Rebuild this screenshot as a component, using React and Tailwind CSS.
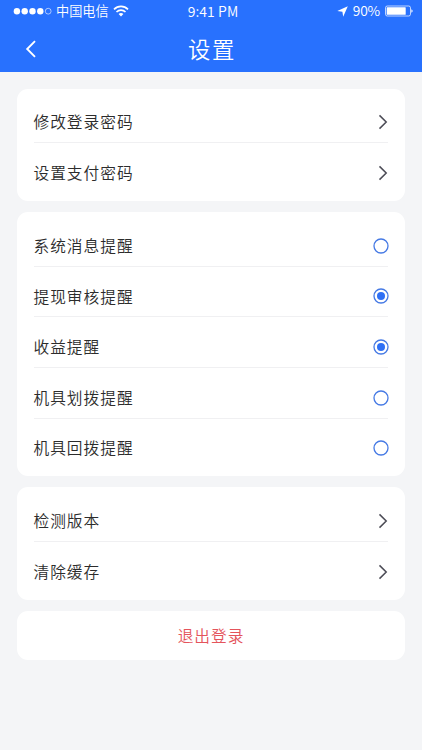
import { useState } from 'react'

const REMINDERS = [
  { id: 'system', label: '系统消息提醒' },
  { id: 'withdraw', label: '提现审核提醒' },
  { id: 'income', label: '收益提醒' },
  { id: 'assign', label: '机具划拨提醒' },
  { id: 'recall', label: '机具回拨提醒' },
]

function StatusBar() {
  return (
    <div className="grid grid-cols-3 items-center h-[23px] pl-[13px] pr-[9px] text-[13px] leading-none">
      <div className="flex items-center">
        <svg width="39" height="8" viewBox="0 0 39 8" fill="currentColor">
          <circle cx="3.9" cy="4.2" r="3.2" />
          <circle cx="11.7" cy="4.2" r="3.2" />
          <circle cx="19.5" cy="4.2" r="3.2" />
          <circle cx="27.3" cy="4.2" r="3.2" />
          <circle cx="35.2" cy="4.2" r="2.9" fill="none" stroke="currentColor" strokeWidth="0.6" />
        </svg>
        <span className="ml-1 pb-[1px] text-[13.2px] whitespace-nowrap">中国电信</span>
        <svg className="ml-1" width="16" height="12" viewBox="0 0 16 12" fill="none" stroke="currentColor" strokeWidth="1.6">
          <path d="M1 4.4C4.9 0.4 11.1 0.4 15 4.4" />
          <path d="M3.5 7C6 4.5 10 4.5 12.5 7" />
          <path d="M5.6 9C7.1 7.7 8.9 7.7 10.4 9L8 11.4Z" fill="currentColor" stroke="none" />
        </svg>
      </div>
      <span className="pb-[2px] text-center text-[14px] tracking-[0.1px]">9:41 PM</span>
      <div className="flex items-center justify-end">
        <svg width="11" height="11" viewBox="0 0 11 11" fill="currentColor">
          <path d="M10.8 0.2L6.2 10.8L5.4 5.8L0.3 5Z" />
        </svg>
        <span className="ml-[5px] pb-[2px] text-[13.8px] tracking-[-0.2px]">90%</span>
        <svg className="ml-[5px]" width="28" height="12" viewBox="0 0 28 12">
          <rect x="0.5" y="1" width="25" height="10" rx="1.8" fill="none" stroke="currentColor" strokeWidth="0.7" />
          <rect x="1.7" y="2.2" width="19" height="7.6" rx="0.6" fill="currentColor" />
          <path d="M26.4 4.2C28 4.8 28 7.2 26.4 7.8Z" fill="currentColor" />
        </svg>
      </div>
    </div>
  )
}

function Card({ children }) {
  return <div className="bg-white rounded-[11px] px-[17px] pt-[4.2px] pb-[6.8px]">{children}</div>
}

function Row({ label, onClick, children }) {
  return (
    <button
      onClick={onClick}
      className="w-full h-[50.6px] pt-[9.6px] flex items-center justify-between border-b border-[#f0f0f2] last:border-transparent text-left"
    >
      <span className="-ml-[0.5px] text-[15.7px] leading-none tracking-[1px] text-[#2c2c2c]">{label}</span>
      {children}
    </button>
  )
}

function Arrow() {
  return (
    <svg width="10" height="16" viewBox="0 0 10 16" fill="none" stroke="#4b4b55" strokeWidth="1.5">
      <path d="M1.5 1.4L8.2 8L1.5 14.6" />
    </svg>
  )
}

function Radio({ checked }) {
  return (
    <svg className="-mr-[1px]" width="16" height="16" viewBox="0 0 16 16">
      <circle cx="8" cy="8" r="7" fill="none" stroke="#4579e4" strokeWidth="1.3" />
      {checked && <circle cx="8" cy="8" r="4" fill="#2f70f5" />}
    </svg>
  )
}

export default function App() {
  const [enabled, setEnabled] = useState(['withdraw', 'income'])

  const toggle = (id) => {
    setEnabled(enabled.includes(id) ? enabled.filter(x => x !== id) : [...enabled, id])
  }

  return (
    <div className="min-h-screen bg-[#f4f5f7] font-['Noto_Sans_CJK_SC',sans-serif] font-[350]">
      <header className="h-[72px] bg-[#2871fe] text-white">
        <StatusBar />
        <div className="grid grid-cols-[40px_1fr_40px] items-center h-[49px] pt-[3px] px-[17px]">
          <button className="pl-[8px]">
            <svg width="12" height="18" viewBox="0 0 12 18" fill="none" stroke="currentColor" strokeWidth="1.9">
              <path d="M10 1.2L2.2 9L10 16.8" />
            </svg>
          </button>
          <h1 className="pb-[2px] pl-[2px] text-center text-[22.4px] leading-none tracking-[1.6px] font-[350]">设置</h1>
        </div>
      </header>

      <main className="px-[17px] pt-[16.5px] space-y-[11.4px]">
        <Card>
          <Row label="修改登录密码"><Arrow /></Row>
          <Row label="设置支付密码"><Arrow /></Row>
        </Card>

        <Card>
          {REMINDERS.map(item => (
            <Row key={item.id} label={item.label} onClick={() => toggle(item.id)}>
              <Radio checked={enabled.includes(item.id)} />
            </Row>
          ))}
        </Card>

        <Card>
          <Row label="检测版本"><Arrow /></Row>
          <Row label="清除缓存"><Arrow /></Row>
        </Card>

        <button className="w-full h-[49.3px] bg-white rounded-[11px] text-[15.7px] leading-none tracking-[1px] text-[#e4545b]">
          退出登录
        </button>
      </main>
    </div>
  )
}
